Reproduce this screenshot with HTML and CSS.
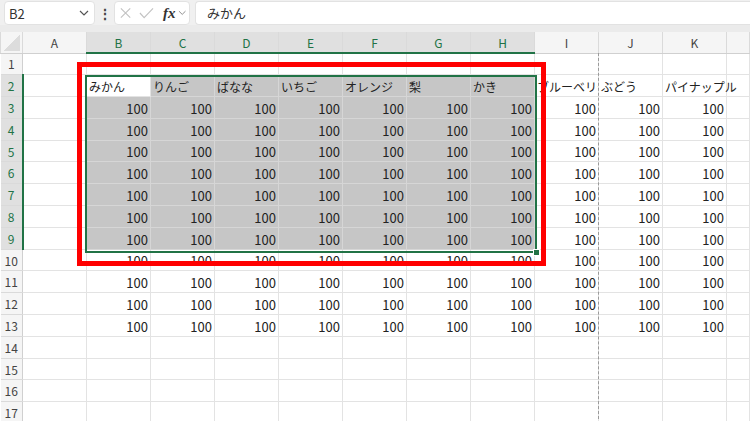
FILE: index.html
```html
<!DOCTYPE html>
<html lang="ja">
<head>
    <meta charset="UTF-8">
    <title>Sheet1</title>
    <link rel="stylesheet" href="styles.css">
</head>
<body>
    <div class="toolbar">
        <div class="namebox">
            <span>B2</span>
            <svg class="chev" width="10" height="6" viewBox="0 0 10 6"><path d="M1 1 L5 5 L9 1" fill="none" stroke="#555" stroke-width="1.2"/></svg>
        </div>
        <div class="dots">⋮</div>
        <div class="fxbox">
            <svg width="14" height="14" viewBox="0 0 14 14"><path d="M2 2 L12 12 M12 2 L2 12" stroke="#c2c2c2" stroke-width="1.2"/></svg>
            <svg width="16" height="14" viewBox="0 0 16 14"><path d="M1 7 L5.5 12 L15 2" fill="none" stroke="#c2c2c2" stroke-width="1.2"/></svg>
            <span class="fx">fx</span>
            <svg width="9" height="6" viewBox="0 0 9 6"><path d="M1 1 L4.5 4.5 L8 1" fill="none" stroke="#888" stroke-width="1"/></svg>
        </div>
        <div class="formula">みかん</div>
    </div>

    <div class="sheet">
        <table class="grid">
            <colgroup>
                <col class="c-head">
                <col span="11" class="c-col">
                <col>
            </colgroup>
            <thead>
                <tr>
                    <th class="corner"><span></span></th>
                    <th>A</th><th class="sel">B</th><th class="sel">C</th><th class="sel">D</th><th class="sel">E</th><th class="sel">F</th><th class="sel">G</th><th class="sel">H</th><th>I</th><th>J</th><th>K</th><th></th>
                </tr>
            </thead>
            <tbody>
                <tr><th>1</th><td></td><td></td><td></td><td></td><td></td><td></td><td></td><td></td><td></td><td></td><td></td><td></td></tr>
                <tr><th class="sel">2</th><td></td><td class="t active">みかん</td><td class="t on">りんご</td><td class="t on">ばなな</td><td class="t on">いちご</td><td class="t on">オレンジ</td><td class="t on">梨</td><td class="t on">かき</td><td class="t">ブルーベリー</td><td class="t">ぶどう</td><td class="t spill">パイナップル</td><td></td></tr>
                <tr><th class="sel">3</th><td></td><td class="n on">100</td><td class="n on">100</td><td class="n on">100</td><td class="n on">100</td><td class="n on">100</td><td class="n on">100</td><td class="n on">100</td><td class="n">100</td><td class="n">100</td><td class="n">100</td><td></td></tr>
                <tr><th class="sel">4</th><td></td><td class="n on">100</td><td class="n on">100</td><td class="n on">100</td><td class="n on">100</td><td class="n on">100</td><td class="n on">100</td><td class="n on">100</td><td class="n">100</td><td class="n">100</td><td class="n">100</td><td></td></tr>
                <tr><th class="sel">5</th><td></td><td class="n on">100</td><td class="n on">100</td><td class="n on">100</td><td class="n on">100</td><td class="n on">100</td><td class="n on">100</td><td class="n on">100</td><td class="n">100</td><td class="n">100</td><td class="n">100</td><td></td></tr>
                <tr><th class="sel">6</th><td></td><td class="n on">100</td><td class="n on">100</td><td class="n on">100</td><td class="n on">100</td><td class="n on">100</td><td class="n on">100</td><td class="n on">100</td><td class="n">100</td><td class="n">100</td><td class="n">100</td><td></td></tr>
                <tr><th class="sel">7</th><td></td><td class="n on">100</td><td class="n on">100</td><td class="n on">100</td><td class="n on">100</td><td class="n on">100</td><td class="n on">100</td><td class="n on">100</td><td class="n">100</td><td class="n">100</td><td class="n">100</td><td></td></tr>
                <tr><th class="sel">8</th><td></td><td class="n on">100</td><td class="n on">100</td><td class="n on">100</td><td class="n on">100</td><td class="n on">100</td><td class="n on">100</td><td class="n on">100</td><td class="n">100</td><td class="n">100</td><td class="n">100</td><td></td></tr>
                <tr><th class="sel">9</th><td></td><td class="n on">100</td><td class="n on">100</td><td class="n on">100</td><td class="n on">100</td><td class="n on">100</td><td class="n on">100</td><td class="n on">100</td><td class="n">100</td><td class="n">100</td><td class="n">100</td><td></td></tr>
                <tr><th>10</th><td></td><td class="n">100</td><td class="n">100</td><td class="n">100</td><td class="n">100</td><td class="n">100</td><td class="n">100</td><td class="n">100</td><td class="n">100</td><td class="n">100</td><td class="n">100</td><td></td></tr>
                <tr><th>11</th><td></td><td class="n">100</td><td class="n">100</td><td class="n">100</td><td class="n">100</td><td class="n">100</td><td class="n">100</td><td class="n">100</td><td class="n">100</td><td class="n">100</td><td class="n">100</td><td></td></tr>
                <tr><th>12</th><td></td><td class="n">100</td><td class="n">100</td><td class="n">100</td><td class="n">100</td><td class="n">100</td><td class="n">100</td><td class="n">100</td><td class="n">100</td><td class="n">100</td><td class="n">100</td><td></td></tr>
                <tr><th>13</th><td></td><td class="n">100</td><td class="n">100</td><td class="n">100</td><td class="n">100</td><td class="n">100</td><td class="n">100</td><td class="n">100</td><td class="n">100</td><td class="n">100</td><td class="n">100</td><td></td></tr>
                <tr><th>14</th><td></td><td></td><td></td><td></td><td></td><td></td><td></td><td></td><td></td><td></td><td></td><td></td></tr>
                <tr><th>15</th><td></td><td></td><td></td><td></td><td></td><td></td><td></td><td></td><td></td><td></td><td></td><td></td></tr>
                <tr><th>16</th><td></td><td></td><td></td><td></td><td></td><td></td><td></td><td></td><td></td><td></td><td></td><td></td></tr>
                <tr><th>17</th><td></td><td></td><td></td><td></td><td></td><td></td><td></td><td></td><td></td><td></td><td></td><td></td></tr>
            </tbody>
        </table>

        <!-- overlays: page break, selection, highlight box -->
        <div class="pagebreak"></div>
        <div class="selection"><span class="handle"></span></div>
        <div class="mark"></div>
    </div>
</body>
</html>
```

FILE: styles.css
```css
body {
    margin: 0;
    width: 750px;
    height: 421px;
    overflow: hidden;
    background-color: #fff;
    font-family: "Noto Sans CJK JP", "Liberation Sans", sans-serif;
    color: #222;
}

/* formula bar */
.toolbar {
    display: flex;
    align-items: stretch;
    height: 24px;
    padding: 1px 0 0 4px;
    background-color: #f0f0f0;
    border-bottom: 7px solid #ebebeb;
}

.namebox {
    width: 91px;
    box-sizing: border-box;
    display: flex;
    align-items: center;
    justify-content: space-between;
    padding: 0 5px 0 4px;
    background-color: #fff;
    border: 1px solid #e2e2e2;
    border-radius: 4px;
    font-size: 13px;
    color: #333;
}

.dots {
    width: 19px;
    text-align: center;
    font-size: 14px;
    font-weight: bold;
    line-height: 24px;
    color: #444;
}

.fxbox {
    width: 76px;
    box-sizing: border-box;
    display: flex;
    align-items: center;
    gap: 7px;
    padding: 0 3px 0 4px;
    background-color: #fff;
    border: 1px solid #e2e2e2;
    border-radius: 4px;
}

.fx {
    font-family: "Liberation Serif", serif;
    font-style: italic;
    font-weight: bold;
    font-size: 15px;
    color: #333;
    margin-left: 2px;
    margin-right: -5px;
}

.formula {
    flex: 1;
    margin-left: 5px;
    padding-left: 11px;
    background-color: #fff;
    border: 1px solid #e2e2e2;
    border-right: none;
    border-radius: 4px 0 0 4px;
    font-size: 13px;
    line-height: 22px;
    color: #333;
}

/* sheet */
.sheet {
    position: relative;
}

.grid {
    border-collapse: collapse;
    table-layout: fixed;
    width: 750px;
    font-size: 13px;
}

.c-head {
    width: 22px;
}

.c-col {
    width: 64px;
}

.grid thead tr {
    height: 21px;
}

.grid tbody tr {
    height: 21.8px;
}

.grid th {
    padding: 0;
    font-weight: normal;
    font-size: 12px;
    color: #444;
    background-color: #f5f5f5;
    border: 1px solid #dadada;
    border-top: none;
}

.grid thead th {
    border-bottom: 1px solid #d0d0d0;
    padding-top: 1px;
}

.grid tbody th {
    border-left: none;
    border-right: 1px solid #d0d0d0;
    text-align: center;
    padding-left: 0;
}

.grid thead th.sel {
    background-color: #e0e0e0;
    color: #217346;
    border-bottom: 2px solid #217346;
}

.grid tbody th.sel {
    background-color: #e0e0e0;
    color: #217346;
    border-right: 2px solid #217346;
}

.corner {
    position: relative;
}

.corner span {
    position: absolute;
    left: 3px;
    right: 2px;
    top: 3px;
    bottom: 2px;
    background: linear-gradient(to bottom right, transparent 50%, #dcdcdc 50%);
}

.grid td {
    padding: 0 3px;
    border: 1px solid #e3e3e3;
    white-space: nowrap;
    overflow: hidden;
    vertical-align: bottom;
    line-height: 19px;
}

.grid td.t {
    font-size: 12px;
    padding-left: 2px;
}

.grid td.spill {
    overflow: visible;
}

.grid td.n {
    text-align: right;
    padding-right: 2px;
}

.grid td.on {
    background-color: #c6c6c6;
    border-color: #d6d6d6;
}

.grid td.active {
    background-color: #fff;
}

.pagebreak {
    position: absolute;
    left: 598px;
    top: 21px;
    bottom: 0;
    border-left: 1px dashed #9a9a9a;
}

.selection {
    position: absolute;
    left: 85px;
    top: 43px;
    width: 448px;
    height: 174px;
    border: 2px solid #217346;
}

.handle {
    position: absolute;
    right: -5px;
    bottom: -5px;
    width: 5px;
    height: 5px;
    background-color: #217346;
    border: 1px solid #fff;
}

.mark {
    position: absolute;
    left: 77px;
    top: 30px;
    width: 459px;
    height: 194px;
    border: 5px solid #f00;
}
```
